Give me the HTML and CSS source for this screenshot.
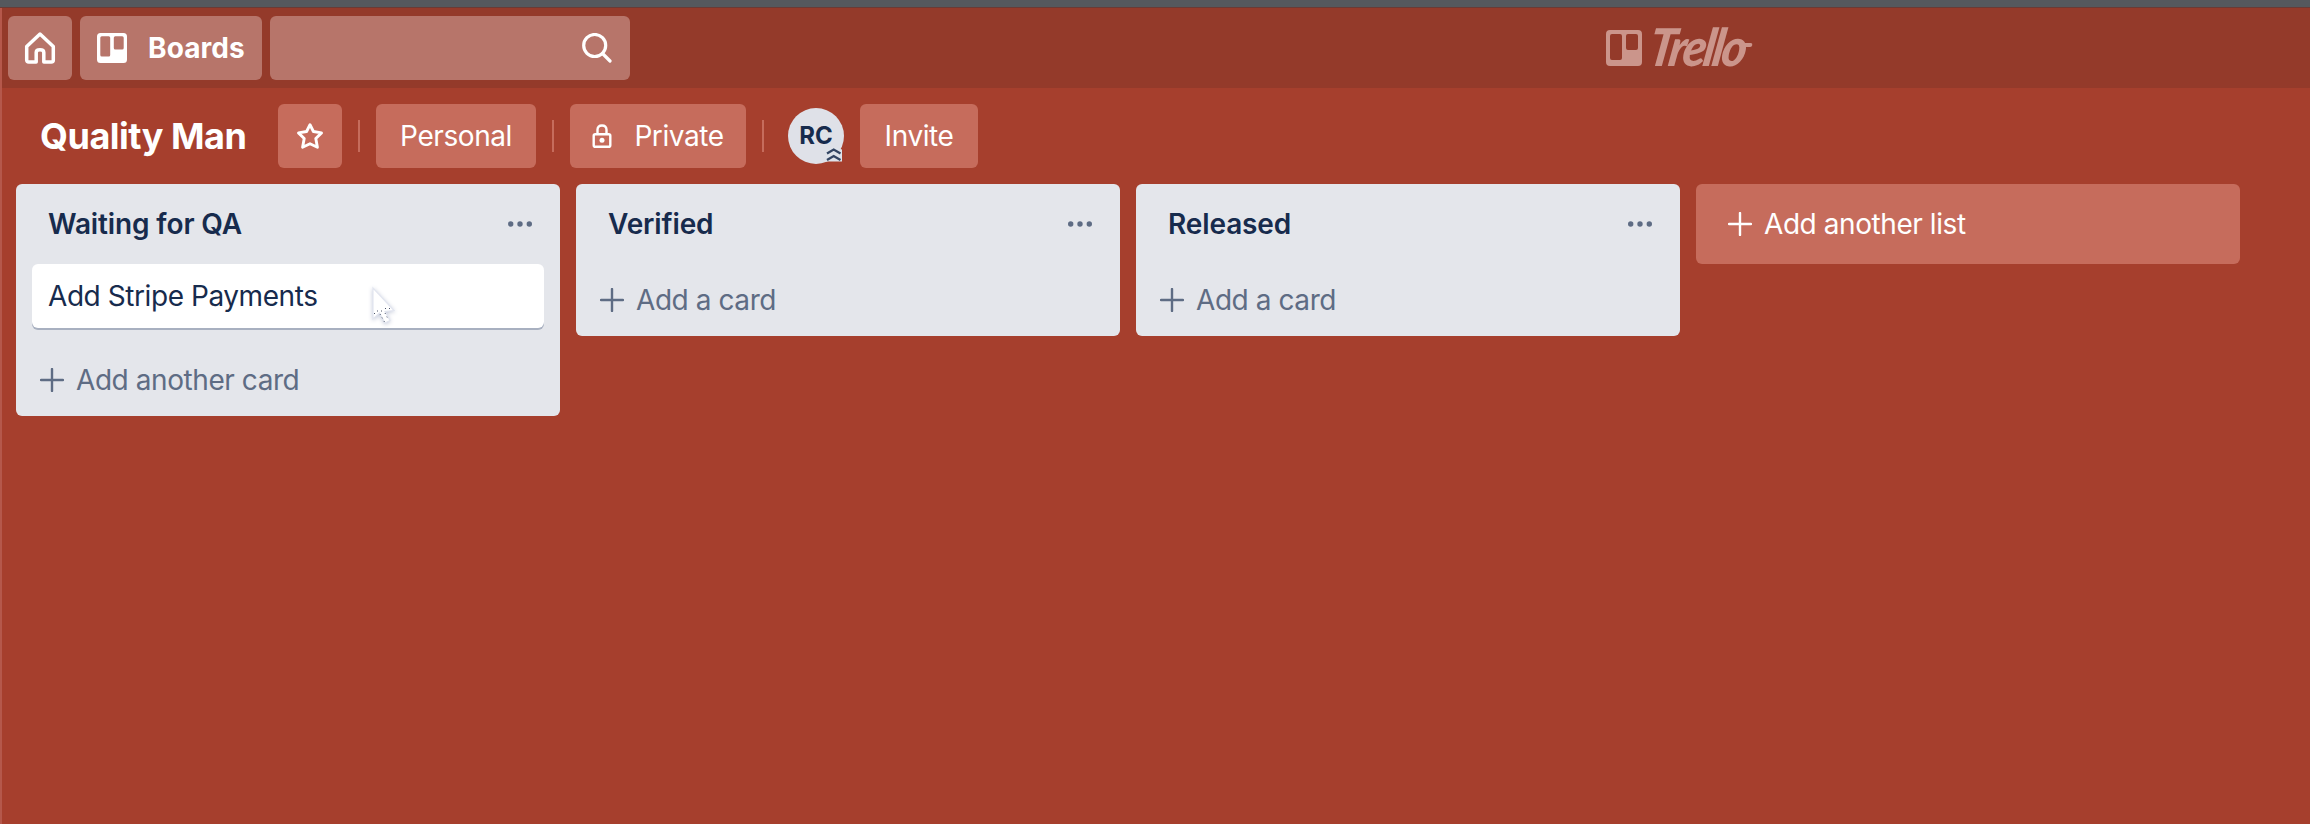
FILE: index.html
```html
<!DOCTYPE html>
<html lang="en">
<head>
<meta charset="utf-8">
<title>Quality Man | Trello</title>
<link rel="stylesheet" href="styles.css">
</head>
<body>
<div class="window-edge"></div>
<div class="app">
  <header class="topbar">
    <nav class="topbar-nav">
      <a class="top-btn home" aria-label="Home"><svg class="icon-home" viewBox="0 0 32 34" fill="none" stroke="#fff" stroke-width="3.5" stroke-linejoin="round"><path d="M16 3 L29.3 15.5 V29 Q29.3 31 27.3 31 H19.8 V21.5 Q19.8 18.8 16 18.8 Q12.2 18.8 12.2 21.5 V31 H4.7 Q2.7 31 2.7 29 V15.5 Z"/></svg></a>
      <a class="top-btn boards"><svg class="icon-board" viewBox="0 0 30 30"><path fill="#fff" fill-rule="evenodd" d="M3.5 0H26.5Q30 0 30 3.5V26.5Q30 30 26.5 30H3.5Q0 30 0 26.5V3.5Q0 0 3.5 0ZM4.8 3.3Q3.3 3.3 3.3 4.8V22Q3.3 23.5 4.8 23.5H11.7Q13.2 23.5 13.2 22V4.8Q13.2 3.3 11.7 3.3ZM18.3 3.3Q16.8 3.3 16.8 4.8V15Q16.8 16.5 18.3 16.5H25.2Q26.7 16.5 26.7 15V4.8Q26.7 3.3 25.2 3.3Z"/></svg><span class="boards-label">Boards</span></a>
      <div class="top-btn search"><svg class="icon-search" viewBox="0 0 30 30" fill="none" stroke="#fff" stroke-width="3.2" stroke-linecap="round"><circle cx="12.7" cy="12.5" r="11"/><path d="M20.5 20.5 L28 28"/></svg></div>
    </nav>
    <div class="logo"><svg class="logo-mark" viewBox="0 0 36 36"><path fill="currentColor" fill-rule="evenodd" d="M4 0H32Q36 0 36 4V32Q36 36 32 36H4Q0 36 0 32V4Q0 0 4 0ZM6 4Q4 4 4 6V28Q4 30 6 30H14Q16 30 16 28V6Q16 4 14 4ZM22 4Q20 4 20 6V18Q20 20 22 20H30Q32 20 32 18V6Q32 4 30 4Z"/></svg><span class="logo-word">Trello</span></div>
  </header>
  <div class="board-bar">
    <h1 class="board-name">Quality Man</h1>
    <a class="bar-btn star"><svg class="icon-star" viewBox="0 0 28 28" fill="none" stroke="#fff" stroke-width="2.9" stroke-linejoin="round"><path d="M14 2.7 L17.4 9.5 L25.5 10.9 L19.8 16.5 L21.4 25.2 L14 21.8 L6.6 25.2 L8.2 16.5 L2.5 10.9 L10.6 9.5 Z"/></svg></a>
    <span class="divider"></span>
    <a class="bar-btn personal"><span>Personal</span></a>
    <span class="divider"></span>
    <a class="bar-btn private"><svg class="icon-lock" viewBox="0 0 20 24" fill="none" stroke="#fff" stroke-width="2.4"><rect x="1.7" y="10.2" width="16.6" height="12.6" rx="1.6"/><path d="M5.5 10 V5.8 Q5.5 1.5 10 1.5 Q14.5 1.5 14.5 5.8 V10"/><circle cx="10" cy="16.3" r="2.5" fill="#fff" stroke="none"/></svg><span>Private</span></a>
    <span class="divider"></span>
    <div class="avatar"><span class="avatar-label">RC</span><svg class="avatar-badge" viewBox="0 0 18 16"><path fill="#dfe3ea" d="M1 3 L8.5 0 L17 2.5 V14.5 H1Z"/><path d="M2 6.5 L8.7 2.5 L15.5 6.5 M2 13 L8.7 9 L15.5 13" fill="none" stroke="#344563" stroke-width="2.3"/></svg></div>
    <a class="bar-btn invite"><span>Invite</span></a>
  </div>
  <main class="lists">
    <section class="list">
      <div class="list-head"><h2 class="list-title">Waiting for QA</h2><svg class="dots" viewBox="0 0 24 6"><circle cx="2.7" cy="3" r="2.7"/><circle cx="12" cy="3" r="2.7"/><circle cx="21.3" cy="3" r="2.7"/></svg></div>
      <article class="card"><span>Add Stripe Payments</span>
        <svg class="cursor" viewBox="0 0 30 42"><path d="M5 3 L5 34 L11.5 28 L17 38 L22 35.5 L17 26.5 L26 25.5 Z" fill="#fff" stroke="#e3e6f0" stroke-width="1.2"/><path d="M6 28.5 H8 M9 26 H16 M17 23.5 H23 M12 29 L16.5 37 M17 28 L20 34" fill="none" stroke="#4d556b" stroke-width="1" stroke-dasharray="1 3"/></svg>
      </article>
      <a class="add-card after-card"><svg class="plus" viewBox="0 0 24 24"><path d="M12 1V23M1 12H23"/></svg><span>Add another card</span></a>
    </section>
    <section class="list">
      <div class="list-head"><h2 class="list-title">Verified</h2><svg class="dots" viewBox="0 0 24 6"><circle cx="2.7" cy="3" r="2.7"/><circle cx="12" cy="3" r="2.7"/><circle cx="21.3" cy="3" r="2.7"/></svg></div>
      <a class="add-card"><svg class="plus" viewBox="0 0 24 24"><path d="M12 1V23M1 12H23"/></svg><span>Add a card</span></a>
    </section>
    <section class="list">
      <div class="list-head"><h2 class="list-title">Released</h2><svg class="dots" viewBox="0 0 24 6"><circle cx="2.7" cy="3" r="2.7"/><circle cx="12" cy="3" r="2.7"/><circle cx="21.3" cy="3" r="2.7"/></svg></div>
      <a class="add-card"><svg class="plus" viewBox="0 0 24 24"><path d="M12 1V23M1 12H23"/></svg><span>Add a card</span></a>
    </section>
    <a class="add-list"><svg class="plus" viewBox="0 0 24 24"><path d="M12 1V23M1 12H23"/></svg><span>Add another list</span></a>
  </main>
</div>
</body>
</html>
```
FILE: styles.css
```css
* { box-sizing: border-box; }
body { margin: 0; height: 824px; overflow: hidden; background: #a63f2d; color: #fff; font: 400 28px/40px Inter, "Liberation Sans", sans-serif; letter-spacing: -0.43px; display: flex; flex-direction: column; }
h1, h2 { margin: 0; }
svg { display: block; flex: none; }
span, h1, h2 { white-space: nowrap; }
.window-edge { height: 8px; flex: none; background: #55585d; border-bottom: 1px solid #6b3a34; }
.app { flex: 1; border-left: 2px solid #b5584b; }
.topbar { height: 80px; background: #943a2a; padding: 8px 0 8px 6px; display: flex; }
.topbar-nav { display: flex; gap: 8px; width: 1598px; }
.top-btn { height: 64px; border-radius: 6px; background: #b7756a; display: flex; align-items: center; }
.home { width: 64px; justify-content: center; }
.icon-home { width: 32px; height: 34px; }
.boards { width: 182px; padding-left: 17px; gap: 21px; }
.icon-board, .icon-search { width: 30px; height: 30px; }
.boards-label { font-weight: 700; letter-spacing: 0.1px; }
.search { width: 360px; justify-content: flex-end; padding-right: 18px; }
.logo { display: flex; align-items: center; color: #cb958b; gap: 8px; }
.logo-mark { width: 36px; height: 36px; }
.logo-word { position: relative; font: italic 900 52px/52px Lato, sans-serif; letter-spacing: -3px; transform: translateY(-2px) scaleX(0.92) skewX(-10deg); transform-origin: left center; }
.logo-word::after { content: ""; position: absolute; right: -8px; top: 23px; width: 14px; height: 4px; border-radius: 2px; background: currentColor; }
.board-bar { height: 96px; padding: 16px 0 16px 38px; display: flex; align-items: center; }
.board-name { width: 238px; font-size: 36px; line-height: 48px; font-weight: 700; letter-spacing: -0.5px; }
.bar-btn { height: 64px; border-radius: 6px; background: #c66c5c; display: flex; align-items: center; justify-content: center; }
.star { width: 64px; }
.icon-star { width: 28px; height: 28px; }
.divider { width: 2px; height: 32px; margin: 0 16px; background: #c66c5c; }
.personal { width: 160px; }
.private { width: 176px; gap: 22px; }
.icon-lock { width: 20px; height: 24px; }
.avatar { position: relative; width: 56px; height: 56px; margin: 0 16px 0 8px; border-radius: 50%; background: #dfe1e8; color: #172b4d; display: flex; align-items: center; justify-content: center; }
.avatar-label { font-size: 24px; font-weight: 700; letter-spacing: 0; }
.avatar-badge { position: absolute; right: 1px; bottom: 1px; width: 18px; height: 16px; }
.invite { width: 118px; }
.lists { display: flex; align-items: flex-start; gap: 16px; padding-left: 14px; }
.list { width: 544px; border-radius: 6px; background: #e4e6eb; padding: 0 16px 16px; color: #172b4d; }
.list-head { height: 80px; padding: 0 12px 0 16px; display: flex; align-items: center; justify-content: space-between; }
.list-title { font-size: 28px; line-height: 40px; font-weight: 600; letter-spacing: -0.12px; }
.dots { width: 24px; height: 6px; fill: #5e6c84; }
.card { position: relative; height: 64px; border-radius: 6px; background: #fff; box-shadow: 0 2px 0 #a8b0c0; padding: 12px 16px; }
.cursor { position: absolute; left: 336px; top: 21px; width: 30px; height: 42px; filter: drop-shadow(0 1px 2px #c5cada); }
.add-card { height: 56px; margin: 8px 0 -8px; padding-left: 8px; display: flex; align-items: center; gap: 12px; color: #5e6c84; }
.after-card { margin-top: 24px; }
.plus { width: 24px; height: 24px; fill: none; stroke: currentColor; stroke-width: 2.4; stroke-linecap: round; }
.add-list { width: 544px; height: 80px; border-radius: 6px; background: #c66c5c; display: flex; align-items: center; gap: 12px; padding-left: 32px; }
```
